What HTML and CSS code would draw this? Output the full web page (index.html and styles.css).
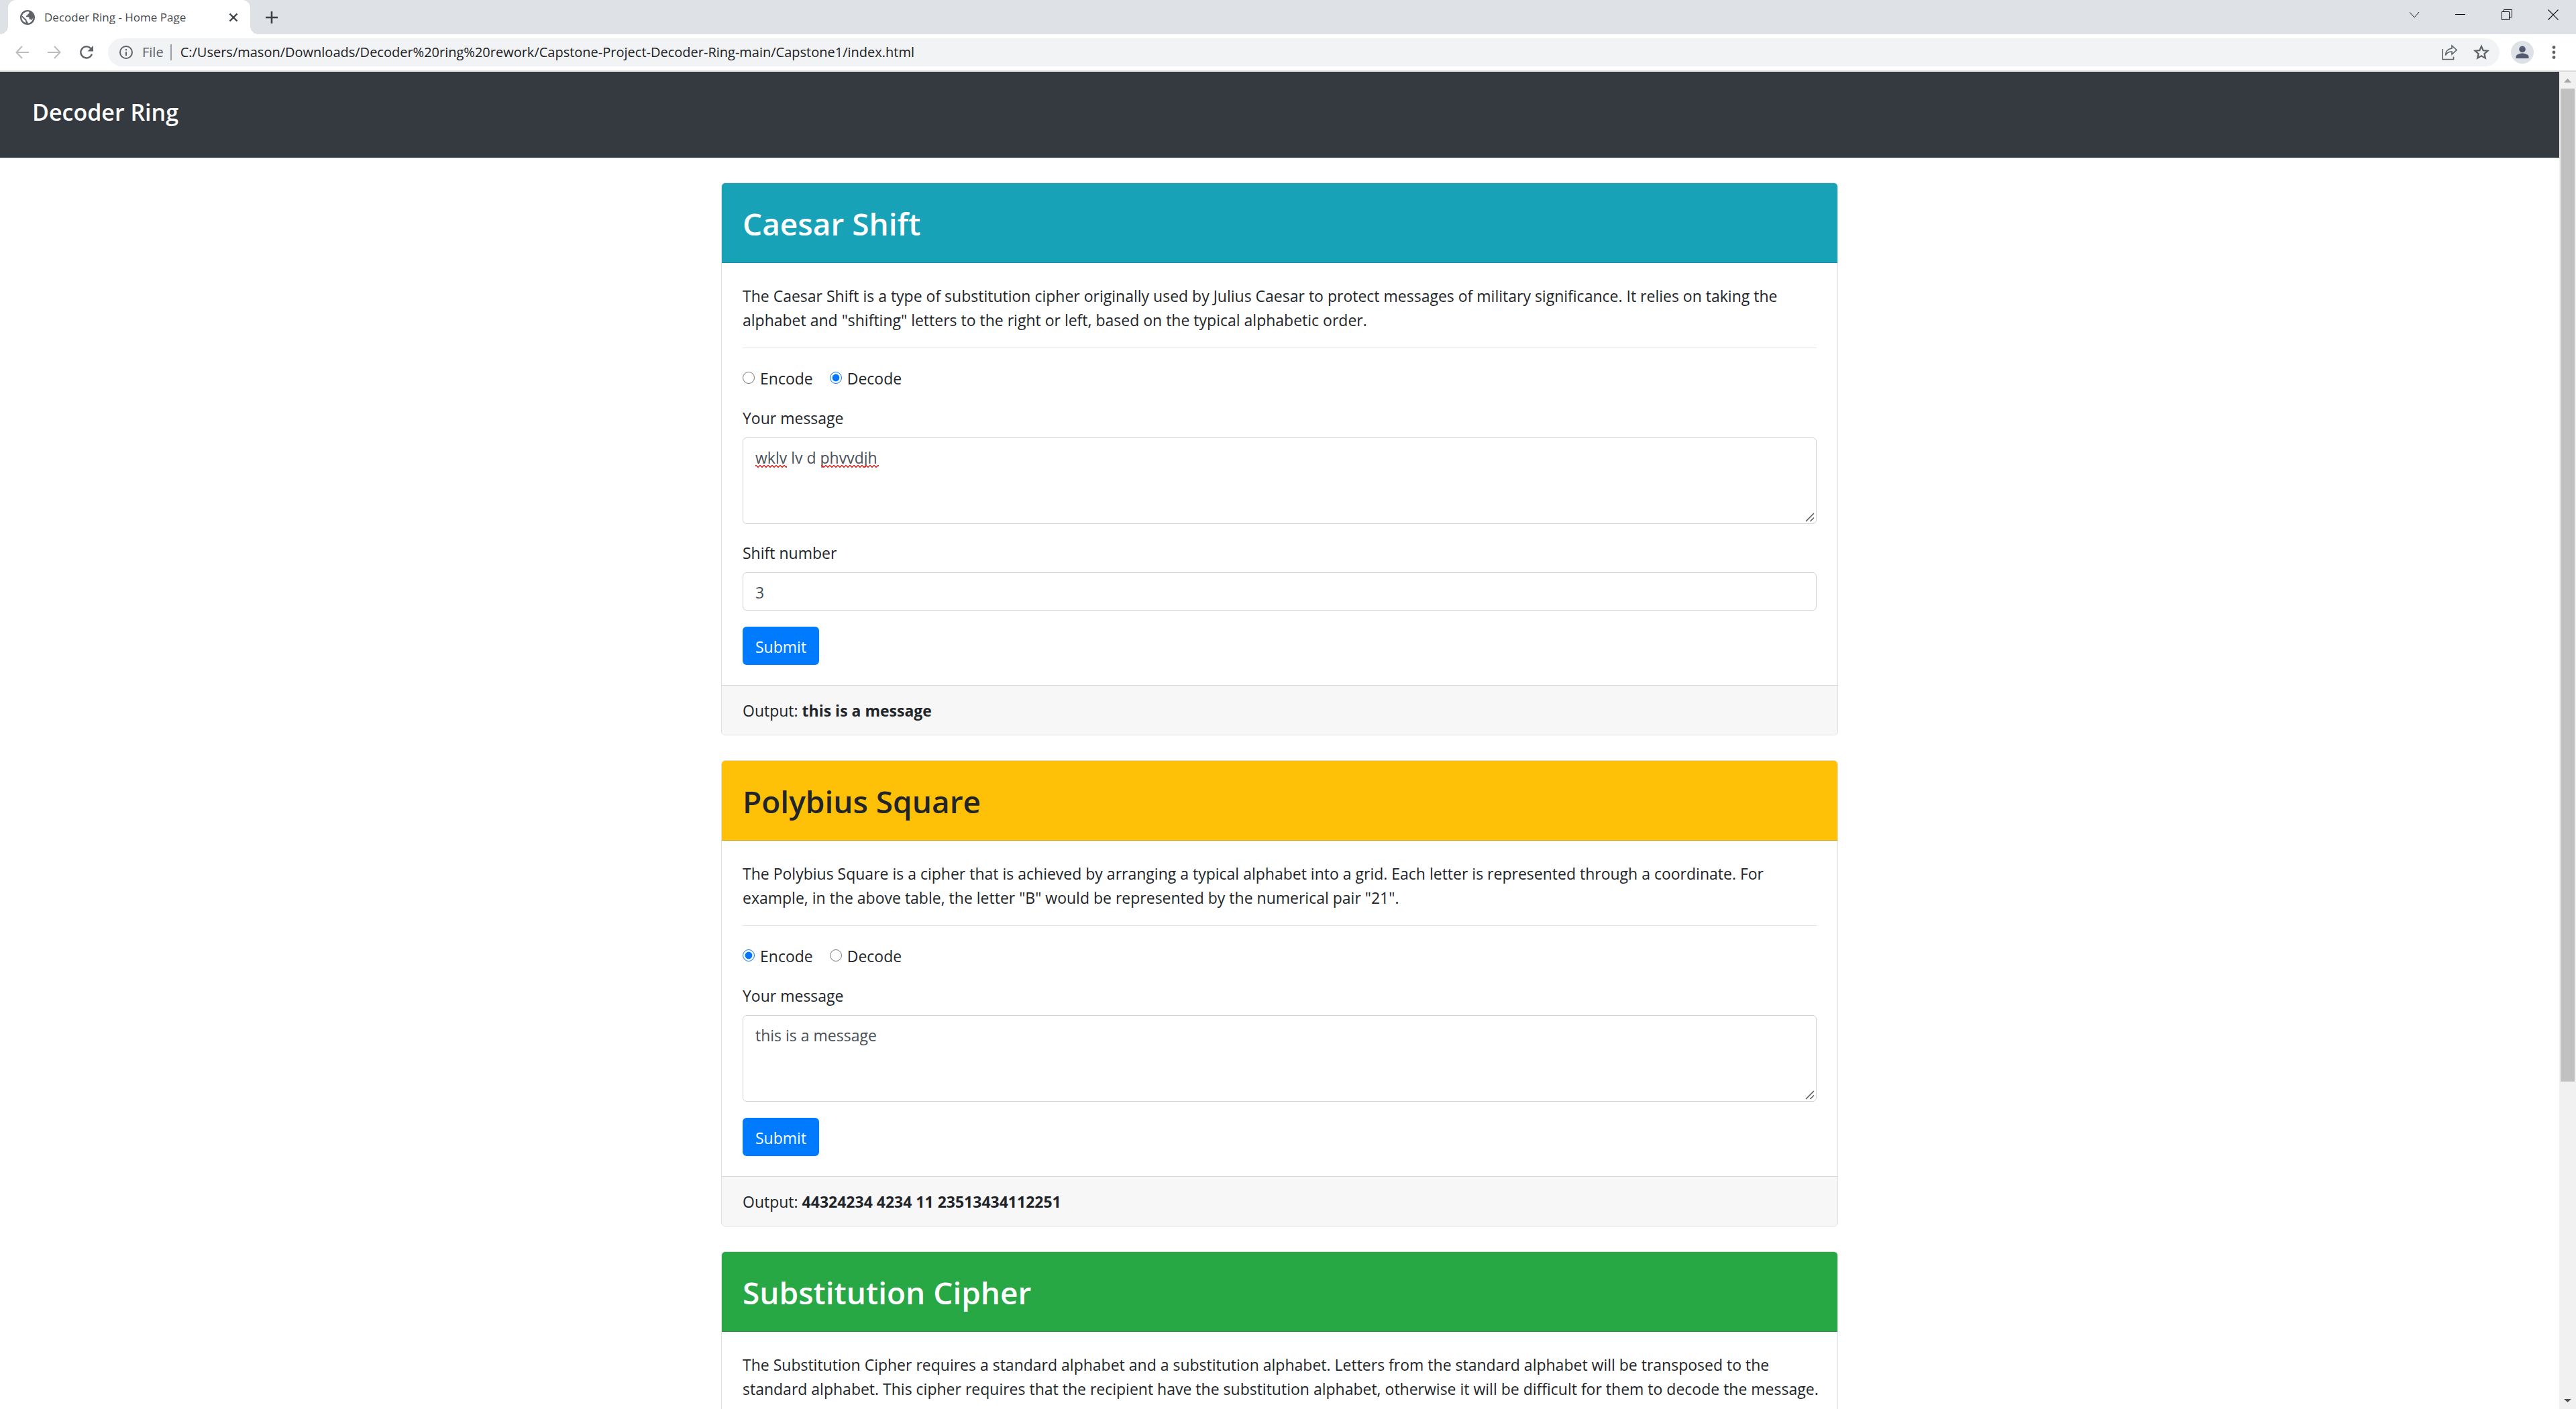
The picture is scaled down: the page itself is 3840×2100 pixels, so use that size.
FILE: index.html
```
<!DOCTYPE html>
<html lang="en">
<head>
<meta charset="utf-8">
<title>Decoder Ring - Home Page</title>
<link rel="stylesheet" href="styles.css">
</head>
<body>
<header class="browser">
  <div class="tabstrip">
    <div class="tab">
      <svg class="globe" viewBox="0 0 24 24"><circle cx="12" cy="12" r="12" fill="#5f6368"/><path d="M9 3.200c.8-.6 3.400-1 5-.7l.8 1.700c0 1.200-.8 2-2 2.200l-.9 2-1.900.8-.2 2h3.600c1 0 1.400.9 1.400 1.900v1.900h1.600c1 0 1.600.6 2 1.500 1.600-1.400 2.900-3.100 2.900-5.500a9.500 9.500 0 0 1-8.800 10.500v-2.300c-1.300 0-2-1-2-2.200v-1.100L3 9.300A9.500 9.500 0 0 1 9 3.200z" fill="#fff"/><path d="M2.600 10.200l6 5.800v1.100c0 1.500.9 2.400 2.200 2.700v1.600a9.500 9.500 0 0 1-8.200-11.200z" fill="#fff"/><path d="M3.400 9.400l5.800 5.700v1.500l2 2.400v2.500l-1.800-.4v-3.100L3 11.400z" fill="#5f6368"/></svg>
      <span class="tab-title">Decoder Ring - Home Page</span>
      <button class="icon-btn" aria-label="Close tab"><svg class="i14" viewBox="0 0 14 14"><path d="M1.500 1.500l11 11m0-11l-11 11" stroke="#3c4043" stroke-width="2.400"/></svg></button>
    </div>
    <button class="icon-btn new-tab" aria-label="New tab"><svg class="i18" viewBox="0 0 18 18"><path d="M9 0v18M0 9h18" stroke="#3c4043" stroke-width="2.600"/></svg></button>
    <div class="window-controls">
      <button class="icon-btn" aria-label="Search tabs"><svg class="i16" viewBox="0 0 16 16"><path d="M1 4l7 8 7-8" fill="none" stroke="#222"/></svg></button>
      <button class="icon-btn" aria-label="Minimize"><svg class="i16" viewBox="0 0 16 16"><path d="M0 7.500h15" stroke="#000"/></svg></button>
      <button class="icon-btn" aria-label="Restore"><svg class="i16" viewBox="0 0 16 16"><path d="M.5 3.500h11v12H.5zM3.500 3.500v-3h12v11h-4" fill="none" stroke="#000"/></svg></button>
      <button class="icon-btn" aria-label="Close"><svg class="i16" viewBox="0 0 16 16"><path d="M.5.5l15 15m0-15l-15 15" stroke="#111" stroke-width="1.200"/></svg></button>
    </div>
  </div>
  <div class="toolbar">
    <button class="icon-btn" aria-label="Back"><svg class="i20" viewBox="0 0 20 20"><path d="M20 10H1.500M10 1L1.500 10l8.500 9" fill="none" stroke="#babcbe" stroke-width="2"/></svg></button>
    <button class="icon-btn" aria-label="Forward"><svg class="i20" viewBox="0 0 20 20"><path d="M0 10h18.500M10 1l8.500 9-8.500 9" fill="none" stroke="#babcbe" stroke-width="2"/></svg></button>
    <button class="icon-btn" aria-label="Reload"><svg class="i20" viewBox="0 0 20 20"><path d="M18 12.500A8.500 8.500 0 1 1 16.200 4.200" fill="none" stroke="#5f6368" stroke-width="2.400"/><path d="M20 0v8.500h-8.500z" fill="#5f6368"/></svg></button>
    <div class="omnibox">
      <svg class="i20" viewBox="0 0 20 20"><circle cx="10" cy="10" r="9" fill="none" stroke="#5f6368" stroke-width="2"/><path d="M10 9v6M10 5v2.200" stroke="#5f6368" stroke-width="2"/></svg>
      <span class="scheme">File</span>
      <input class="address" type="text" aria-label="Address" value="C:/Users/mason/Downloads/Decoder%20ring%20rework/Capstone-Project-Decoder-Ring-main/Capstone1/index.html">
      <button class="icon-btn" aria-label="Share"><svg class="i24" viewBox="0 0 24 24"><path d="M2 7v15.500h16.500v-4" fill="none" stroke="#5f6368" stroke-width="1.600"/><path d="M16 2l7 6.500-7 6.500v-4c-4 0-7.500 1.500-9.500 5.500 0-5.500 3.500-9.500 9.500-10.500z" fill="none" stroke="#5f6368" stroke-width="1.600"/></svg></button>
      <button class="icon-btn" aria-label="Bookmark"><svg class="i24" viewBox="0 0 24 24"><path d="M12 3l2.700 6.100 6.700.6-5 4.400 1.500 6.500-5.900-3.400-5.900 3.400 1.500-6.500-5-4.400 6.700-.6z" fill="none" stroke="#5f6368" stroke-width="2.200"/></svg></button>
    </div>
    <button class="icon-btn avatar" aria-label="Profile"><svg viewBox="0 0 34 34"><circle cx="17" cy="17" r="17" fill="#dee1e6"/><circle cx="17" cy="12.500" r="4.800" fill="#525c6e"/><path d="M7.500 26v-2.500c0-3.500 6-5 9.500-5s9.500 1.500 9.500 5V26z" fill="#525c6e"/></svg></button>
    <button class="icon-btn" aria-label="Menu"><svg class="i24" viewBox="0 0 24 24"><g fill="#5f6368"><circle cx="12" cy="4.500" r="2.400"/><circle cx="12" cy="12" r="2.400"/><circle cx="12" cy="19.500" r="2.400"/></g></svg></button>
  </div>
</header>
<div class="viewport">
  <div class="page">
    <nav class="navbar"><span class="brand">Decoder Ring</span></nav>
    <main class="container">
      <section class="card">
        <div class="card-header info"><h2>Caesar Shift</h2></div>
        <div class="card-body">
          <p>The Caesar Shift is a type of substitution cipher originally used by Julius Caesar to protect messages of military significance. It relies on taking the alphabet and "shifting" letters to the right or left, based on the typical alphabetic order.</p>
          <hr>
          <form>
            <div class="radios">
              <input type="radio" name="caesar" id="caesar-encode"><label for="caesar-encode">Encode</label>
              <input type="radio" name="caesar" id="caesar-decode" checked><label for="caesar-decode">Decode</label>
            </div>
            <label class="field-label" for="caesar-message">Your message</label>
            <div class="field">
              <textarea id="caesar-message" spellcheck="false">wklv lv d phvvdjh</textarea>
              <span class="squiggle first"></span>
              <span class="squiggle second"></span>
              <svg class="grip" viewBox="0 0 14 14"><path d="M1 13L13 1M7.500 13L13 7.500" stroke="#555" stroke-width="1.500"/></svg>
            </div>
            <label class="field-label" for="shift">Shift number</label>
            <div class="field"><input class="text-input" id="shift" type="text" value="3"></div>
            <button class="submit" type="button">Submit</button>
          </form>
        </div>
        <div class="card-footer">Output: <strong>this is a message</strong></div>
      </section>
      <section class="card">
        <div class="card-header warning"><h2>Polybius Square</h2></div>
        <div class="card-body">
          <p>The Polybius Square is a cipher that is achieved by arranging a typical alphabet into a grid. Each letter is represented through a coordinate. For example, in the above table, the letter "B" would be represented by the numerical pair "21".</p>
          <hr>
          <form>
            <div class="radios">
              <input type="radio" name="polybius" id="polybius-encode" checked><label for="polybius-encode">Encode</label>
              <input type="radio" name="polybius" id="polybius-decode"><label for="polybius-decode">Decode</label>
            </div>
            <label class="field-label" for="polybius-message">Your message</label>
            <div class="field">
              <textarea id="polybius-message" spellcheck="false">this is a message</textarea>
              <svg class="grip" viewBox="0 0 14 14"><path d="M1 13L13 1M7.500 13L13 7.500" stroke="#555" stroke-width="1.500"/></svg>
            </div>
            <button class="submit" type="button">Submit</button>
          </form>
        </div>
        <div class="card-footer">Output: <strong>44324234 4234 11 23513434112251</strong></div>
      </section>
      <section class="card">
        <div class="card-header success"><h2>Substitution Cipher</h2></div>
        <div class="card-body">
          <p class="wide">The Substitution Cipher requires a standard alphabet and a substitution alphabet. Letters from the standard alphabet will be transposed to the<br>standard alphabet. This cipher requires that the recipient have the substitution alphabet, otherwise it will be difficult for them to decode the message.</p>
          <hr>
        </div>
      </section>
    </main>
  </div>
  <div class="scrollbar">
    <svg class="arrow" viewBox="0 0 25 25"><path d="M7 16l5.500-6 5.500 6z" fill="#a3a3a3"/></svg>
    <div class="thumb"></div>
    <div class="track-rest"></div>
    <svg class="arrow" viewBox="0 0 25 25"><path d="M7 10l5.500 5 5.500-5z" fill="#505050"/></svg>
  </div>
</div>
</body>
</html>
```
FILE: styles.css
```
* { box-sizing: border-box; }
body {
  margin: 0;
  height: 100vh;
  display: flex;
  flex-direction: column;
  overflow: hidden;
  background: #fff;
  color: #212529;
  font: 23px/36px "Open Sans", "Noto Sans", sans-serif;
}
svg { display: block; }
h2, p { margin: 0; }
input, textarea, button { font: inherit; }
.i14 { width: 14px; height: 14px; }
.i16 { width: 16px; height: 16px; }
.i18 { width: 18px; height: 18px; }
.i20 { width: 20px; height: 20px; }
.i24 { width: 24px; height: 24px; }
.icon-btn { border: 0; padding: 0; background: none; }

/* Browser frame */
.browser { flex: none; border-bottom: 2px solid #dadada; }
.tabstrip {
  display: flex;
  align-items: center;
  height: 51px;
  padding-left: 12px;
  background: #dee1e6;
}
.tab {
  position: relative;
  display: flex;
  align-items: center;
  gap: 14px;
  width: 361px;
  height: 51px;
  padding: 0 18px;
  background: #fff;
  border-radius: 12px 12px 0 0;
}
.tab::before, .tab::after {
  content: "";
  position: absolute;
  bottom: 0;
  width: 12px;
  height: 12px;
}
.tab::before { left: -12px; background: radial-gradient(circle at 0 0, #dee1e6 12px, #fff 12px); }
.tab::after { right: -12px; background: radial-gradient(circle at 12px 0, #dee1e6 12px, #fff 12px); }
.globe { width: 22px; height: 22px; }
.tab-title { flex: 1; color: #45494d; font-size: 17px; white-space: nowrap; }
.new-tab { margin-left: 23px; }
.window-controls { display: flex; gap: 53px; margin-left: auto; padding: 0 26px 7px 0; }
.toolbar {
  display: flex;
  align-items: center;
  gap: 28px;
  height: 54px;
  padding: 0 21px 0 23px;
}
.omnibox {
  display: flex;
  align-items: center;
  flex: 1;
  height: 42px;
  margin: 0 -11px 0 -6px;
  padding: 0 15px 0 17px;
  border-radius: 21px;
  background: #f1f3f4;
  font-size: 20px;
}
.scheme {
  margin: 0 13px 0 14px;
  padding-right: 10px;
  border-right: 2px solid #9aa0a6;
  color: #5f6368;
  line-height: 24px;
}
.address { flex: 1; border: 0; padding: 0; background: none; color: #202124; outline: 0; }
.omnibox .icon-btn { margin-left: 24px; }
.avatar { width: 34px; height: 34px; }
.toolbar > .avatar + .icon-btn { margin-left: -10px; }

/* Page area */
.viewport { display: flex; flex: 1; min-height: 0; }
.page { flex: 1; overflow: hidden; }
.navbar {
  height: 129px;
  padding: 36px 48px;
  border-bottom: 1px solid #dee2e6;
  background: #343a40;
  color: #fff;
}
.brand { display: block; font-size: 34px; line-height: 48px; font-weight: 600; }
.container { max-width: 1665px; margin: 36px auto 0; }
.card {
  margin-bottom: 37px;
  border: 1px solid #dfdfdf;
  border-radius: 6px;
  overflow: hidden;
}
.card-header { padding: 31px 31px 29px; border-bottom: 1px solid rgba(0, 0, 0, .125); }
.card-header h2 { font-size: 46px; line-height: 58px; font-weight: 600; }
.info { background: #17a2b8; color: #fff; }
.warning { background: #ffc107; }
.success { background: #28a745; color: #fff; }
.card-body { padding: 31px 31px 30px; }
.wide { white-space: nowrap; }
hr { margin: 23px 0 25px; border: 0; border-top: 1px solid #e3e3e3; }
.radios { display: flex; align-items: center; margin-bottom: 23px; }
.radios input { width: 18px; height: 18px; margin: 0 8px 0 0; accent-color: #0075ff; }
.radios label { margin-right: 25px; padding-top: 2px; }
.field-label { display: block; margin-bottom: 11px; }
.field { position: relative; margin-bottom: 24px; }
textarea, .text-input {
  display: block;
  width: 100%;
  padding: 11px 18px 9px;
  border: 1px solid #ced4da;
  border-radius: 6px;
  background: #fff;
  color: #495057;
  outline: 0;
}
textarea { height: 129px; resize: none; overflow: hidden; }
.text-input { height: 57px; }
.field + .field-label { margin-top: 25px; }
.field:has(+ .field-label) { margin-bottom: 0; }
.grip { position: absolute; right: 3px; bottom: 3px; width: 14px; height: 14px; }
.squiggle {
  position: absolute;
  top: 41px;
  height: 4px;
  background: linear-gradient(45deg, transparent 40%, #f22 40% 60%, transparent 60%) 0 0 / 6px 4px,
    linear-gradient(-45deg, transparent 40%, #f22 40% 60%, transparent 60%) 3px 0 / 6px 4px;
}
.first { left: 19px; width: 47px; }
.second { left: 117px; width: 86px; }
.submit {
  display: block;
  height: 57px;
  padding: 2px 19px 0;
  border: 0;
  border-radius: 6px;
  background: #007bff;
  color: #fff;
}
.card-footer { padding: 19px 31px 18px; border-top: 1px solid #d8d8d8; background: #f7f7f7; }

.scrollbar { display: flex; flex-direction: column; width: 25px; background: #f1f1f1; }
.arrow { width: 25px; height: 25px; }
.thumb { flex: 16; margin: 0 2px; background: #c1c1c1; }
.track-rest { flex: 5; }
```
